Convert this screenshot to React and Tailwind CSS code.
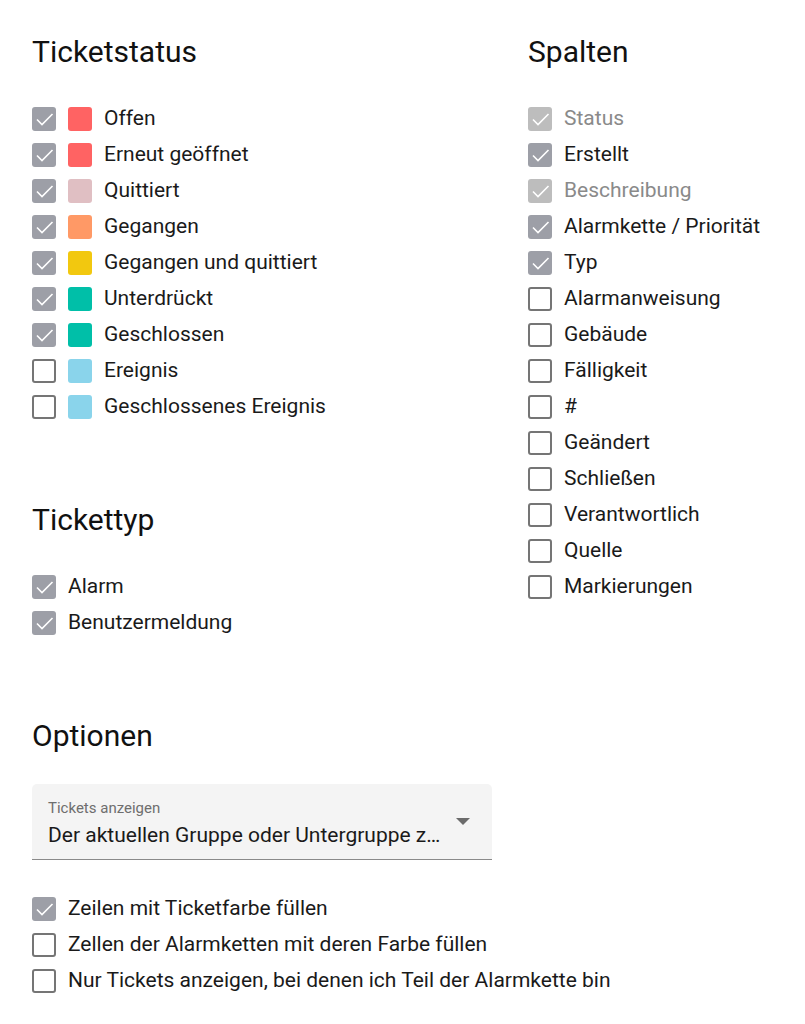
import React from "react";

const statusItems = [
    { label: "Offen", color: "#ff6363", checked: true },
    { label: "Erneut geöffnet", color: "#ff6363", checked: true },
    { label: "Quittiert", color: "#e0bfc3", checked: true },
    { label: "Gegangen", color: "#ff9966", checked: true },
    { label: "Gegangen und quittiert", color: "#f2c80f", checked: true },
    { label: "Unterdrückt", color: "#00bfa8", checked: true },
    { label: "Geschlossen", color: "#00bfa8", checked: true },
    { label: "Ereignis", color: "#8ad4eb", checked: false },
    { label: "Geschlossenes Ereignis", color: "#8ad4eb", checked: false },
];

const columnItems = [
    { label: "Status", checked: true, disabled: true },
    { label: "Erstellt", checked: true },
    { label: "Beschreibung", checked: true, disabled: true },
    { label: "Alarmkette / Priorität", checked: true },
    { label: "Typ", checked: true },
    { label: "Alarmanweisung" },
    { label: "Gebäude" },
    { label: "Fälligkeit" },
    { label: "#" },
    { label: "Geändert" },
    { label: "Schließen" },
    { label: "Verantwortlich" },
    { label: "Quelle" },
    { label: "Markierungen" },
];

// Checkbox im Material-Stil
function Box({ checked, disabled }) {
    if (checked) {
        return (
            <span className={"inline-flex items-center justify-center w-6 h-6 rounded-[3px] " + (disabled ? "bg-[#bdbdbd]" : "bg-[#9d9fa7]")}>
                <svg width="24" height="24" viewBox="0 0 24 24" fill="none">
                    <path d="M5 12.5l5 5L20.5 7" stroke="#ffffff" strokeWidth="1.6" />
                </svg>
            </span>
        );
    }
    return <span className="inline-block w-6 h-6 rounded-[3px] border-2 border-[#757575] bg-white" />;
}

function Row({ item, swatch }) {
    return (
        <div className="flex items-center h-9">
            <Box checked={item.checked} disabled={item.disabled} />
            {swatch && <span className="ml-3 w-6 h-6 rounded-[3px]" style={{ backgroundColor: item.color }} />}
            <span className={"ml-3 text-[21px] " + (item.disabled ? "text-[#8a8a8a]" : "text-[#1a1a1a]")}>{item.label}</span>
        </div>
    );
}

function Heading({ children, className = "" }) {
    return <h2 className={"text-[30px] leading-9 text-[#111] " + className}>{children}</h2>;
}

export default function App() {
    return (
        <div className="bg-white w-[805px] min-h-[1024px] pl-8 pt-[34px]" style={{ fontFamily: "Roboto, sans-serif" }}>
            <div className="flex">
                <div className="w-[496px]">
                    <Heading className="mb-[31px]">Ticketstatus</Heading>
                    {statusItems.map((it, i) => <Row key={i} item={it} swatch />)}

                    <div className="mt-[77px]">
                        <Heading className="mb-[31px]">Tickettyp</Heading>
                        <Row item={{ label: "Alarm", checked: true }} />
                        <Row item={{ label: "Benutzermeldung", checked: true }} />
                    </div>
                </div>
                <div>
                    <Heading className="mb-[31px]">Spalten</Heading>
                    {columnItems.map((it, i) => <Row key={i} item={it} />)}
                </div>
            </div>

            <div className="mt-[77px]">
                <Heading>Optionen</Heading>
                <div className="mt-[30px] w-[460px] h-[76px] bg-[#f4f4f4] rounded-t-[5px] border-b border-[#8a8a8a] relative px-4 pt-[15px]">
                    <div className="text-[15px] leading-[18px] text-[#6e6e6e]">Tickets anzeigen</div>
                    <div className="text-[21px] leading-7 text-[#1a1a1a] mt-[4px] w-[394px] whitespace-nowrap overflow-hidden text-ellipsis">Der aktuellen Gruppe oder Untergruppe zugeordnet</div>
                    <svg className="absolute right-[22px] top-[34px]" width="14" height="8" viewBox="0 0 14 8">
                        <path d="M0 0h14L7 7z" fill="#6b6b6b" />
                    </svg>
                </div>
                <div className="mt-[31px]">
                    <Row item={{ label: "Zeilen mit Ticketfarbe füllen", checked: true }} />
                    <Row item={{ label: "Zellen der Alarmketten mit deren Farbe füllen" }} />
                    <Row item={{ label: "Nur Tickets anzeigen, bei denen ich Teil der Alarmkette bin" }} />
                </div>
            </div>
        </div>
    );
}
